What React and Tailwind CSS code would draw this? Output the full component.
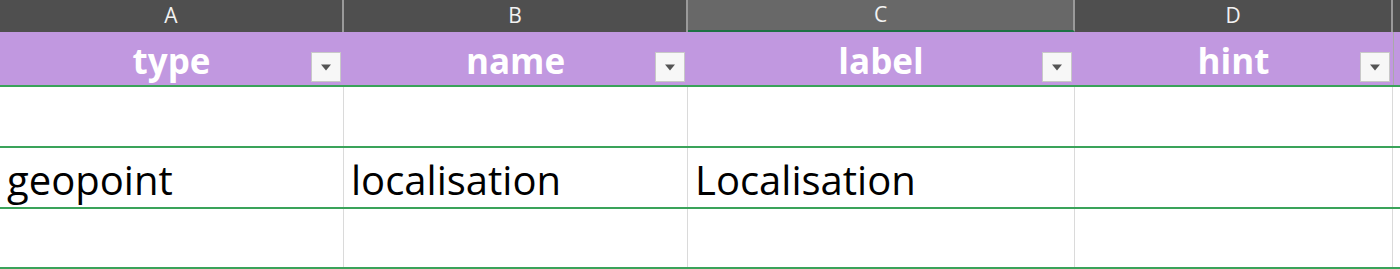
import React from "react";

const cols = [
    { key: "A", w: "w-[344px]", head: "type", value: "geopoint" },
    { key: "B", w: "w-[344px]", head: "name", value: "localisation" },
    { key: "C", w: "w-[387px]", head: "label", value: "Localisation", selected: true },
    { key: "D", w: "w-[318px]", head: "hint", value: "" },
];

const FilterButton = () => (
    <div className="absolute right-[2px] bottom-[3px] w-[30px] h-[30px] bg-[#f7f7f7] border border-[#c8c8c8] flex items-center justify-center">
        <svg width="12" height="7" viewBox="0 0 12 7">
            <path d="M1 0.5 L11 0.5 L6 6.5 Z" fill="#555" />
        </svg>
    </div>
);

const App = () => {
    const font = { fontFamily: "'Open Sans', 'Noto Sans', sans-serif" };
    return (
        <div className="w-[1400px] h-[269px] bg-white overflow-hidden" style={font}>
            {/* column letters */}
            <div className="flex h-[32px] bg-[#4f4f4f]">
                {cols.map((c) => (
                    <div
                        key={c.key}
                        className={`${c.w} shrink-0 flex items-center justify-center border-r-2 border-[#9a9a9a] text-[21px] text-[#f2f2f2] ${
                            c.selected ? "bg-[#686868] border-b-2 border-b-[#1e7145]" : ""
                        }`}
                    >
                        {c.key}
                    </div>
                ))}
                <div className="flex-1" />
            </div>

            {/* header row */}
            <div className="flex h-[55px] bg-[#c198e0] border-b-2 border-[#3aa35a]">
                {cols.map((c) => (
                    <div
                        key={c.key}
                        className={`${c.w} shrink-0 relative flex items-center justify-center border-r border-[#c198e0]`}
                    >
                        <span className="text-[35px] font-bold text-white leading-none pt-[4px]">{c.head}</span>
                        <FilterButton />
                    </div>
                ))}
                <div className="flex-1 border-l border-[#a9a9a9]" />
            </div>

            {/* data rows */}
            {[null, "data", null].map((r, i) => (
                <div
                    key={i}
                    className={`flex ${i === 2 ? "h-[60px]" : "h-[61px]"} border-b-2 border-[#3aa35a]`}
                >
                    {cols.map((c) => (
                        <div
                            key={c.key}
                            className={`${c.w} shrink-0 flex items-center pl-[7px] pt-[4px] border-r border-[#dadada] text-[40px] text-black leading-none`}
                        >
                            {r ? c.value : ""}
                        </div>
                    ))}
                    <div className="flex-1" />
                </div>
            ))}
        </div>
    );
};

export default App;
